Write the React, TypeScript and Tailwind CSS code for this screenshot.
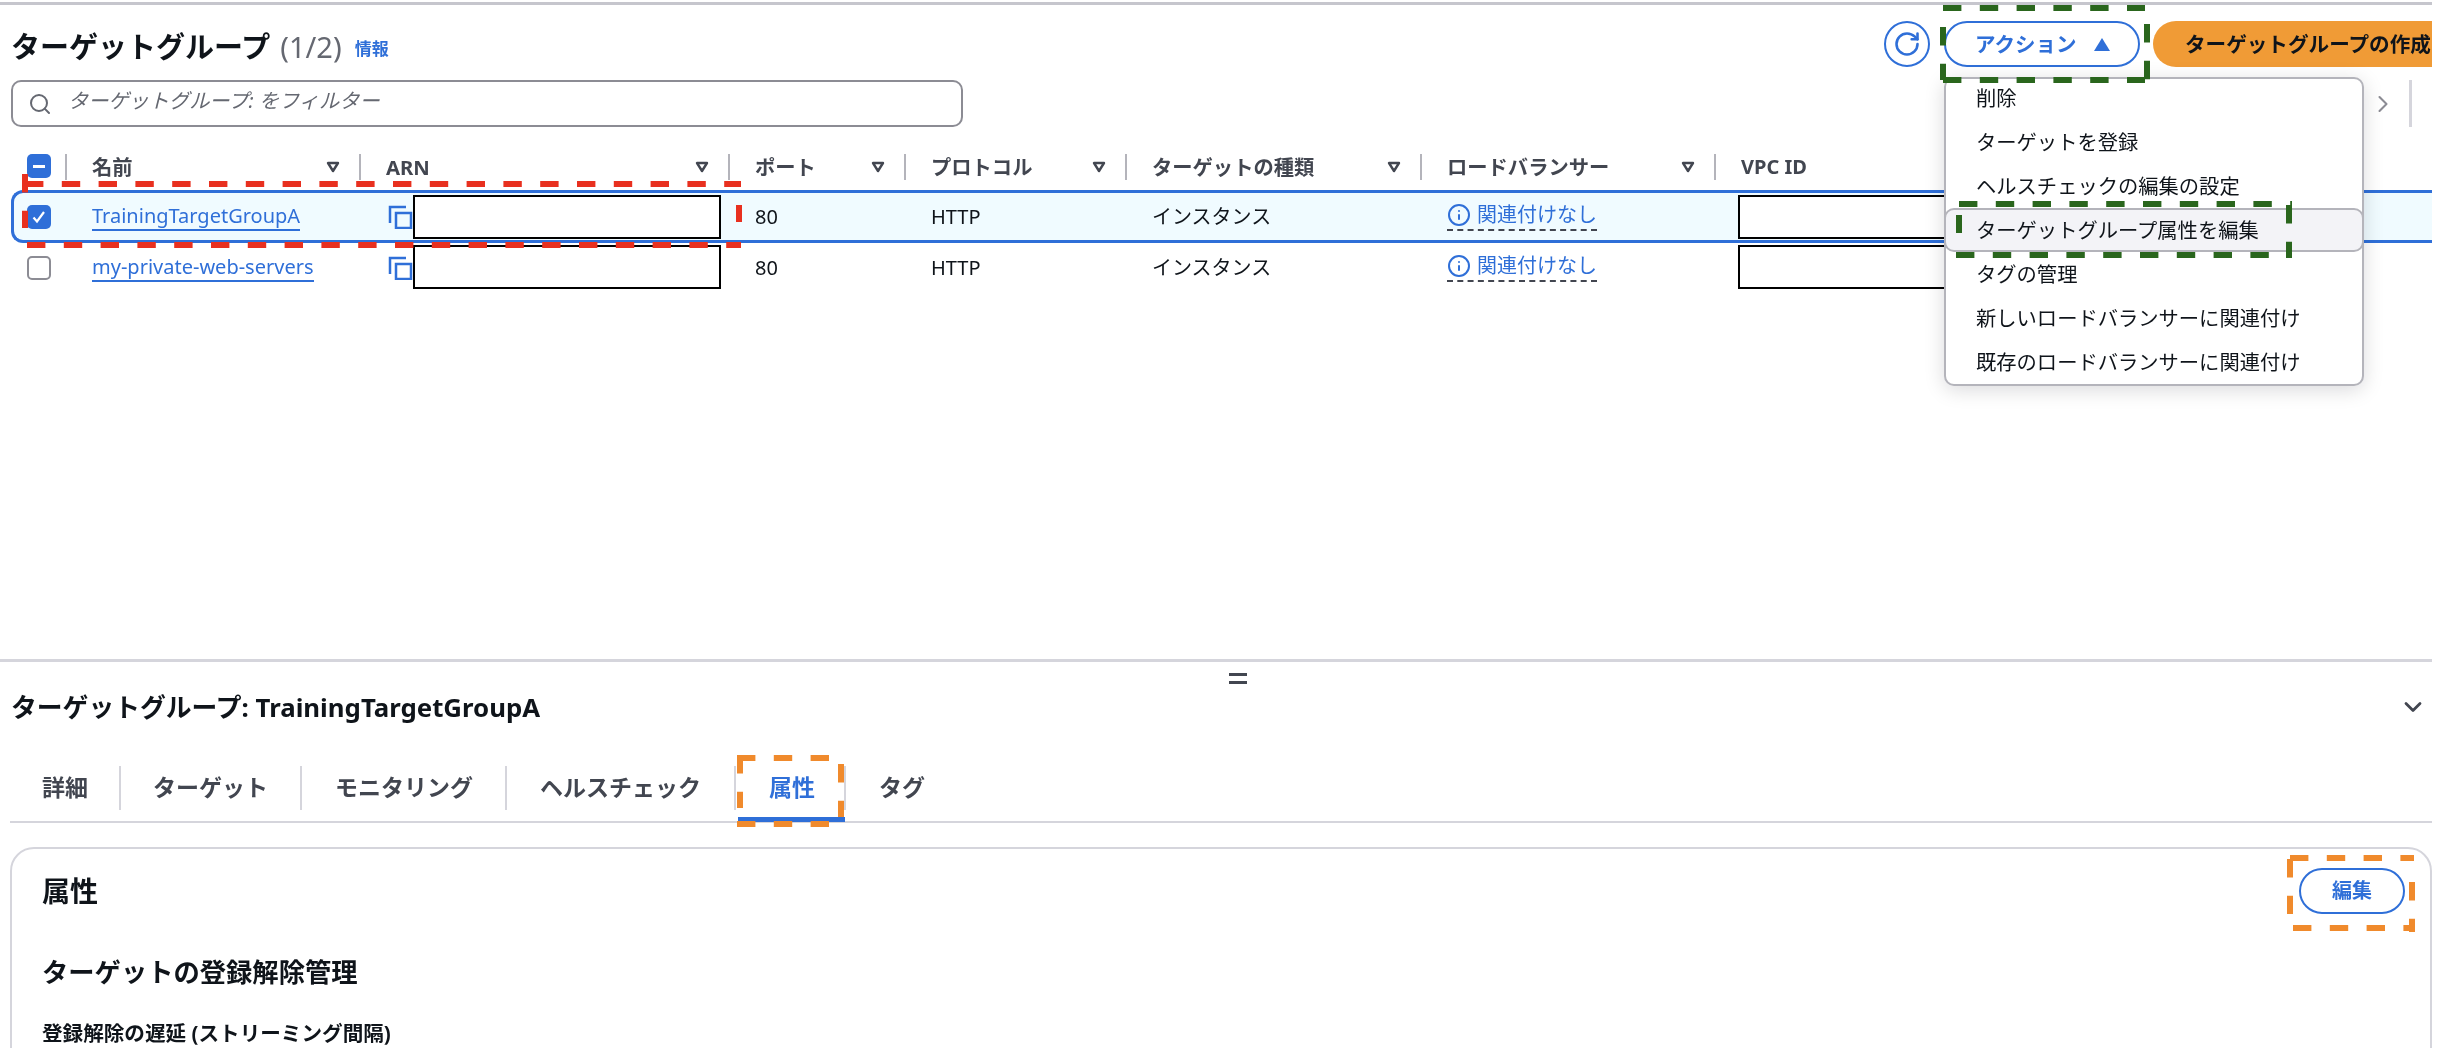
import { Search, RotateCw, Info, ChevronRight, ChevronDown } from 'lucide-react'

const jp = "font-['Noto_Sans','Noto_Sans_CJK_JP',sans-serif]"

const actions = [
    '削除',
    'ターゲットを登録',
    'ヘルスチェックの編集の設定',
    'ターゲットグループ属性を編集',
    'タグの管理',
    '新しいロードバランサーに関連付け',
    '既存のロードバランサーに関連付け',
]

const groups = [
    { name: 'TrainingTargetGroupA', selected: true },
    { name: 'my-private-web-servers', selected: false },
]

function SortCaret() {
    return (
        <svg width="14" height="12" viewBox="0 0 14 12" className="shrink-0">
            <path d="M2 2h10L7 10z" fill="none" stroke="#424650" strokeWidth="2.4" strokeLinejoin="round" />
        </svg>
    )
}

function HeaderCell({ label, className, sort = true }: { label: string; className: string; sort?: boolean }) {
    return (
        <div className={`flex items-center justify-between h-[26px] pl-[25px] pr-[19px] border-r-2 border-[#b4b4bb] shrink-0 ${className}`}>
            <span className="text-[20.3px] font-bold text-[#424650] leading-none">{label}</span>
            {sort && <SortCaret />}
        </div>
    )
}

function CopyIcon() {
    return (
        <svg width="25" height="24" viewBox="0 0 25 24" className="shrink-0">
            <path d="M2 18V2h16" fill="none" stroke="#2f6fd8" strokeWidth="2.5" />
            <rect x="8" y="8" width="15" height="15" fill="none" stroke="#2f6fd8" strokeWidth="2.5" />
        </svg>
    )
}

function Checkbox({ checked }: { checked: boolean }) {
    if (checked) {
        return (
            <div className="w-[24px] h-[24px] rounded-[5px] bg-[#2f6fd8] flex items-center justify-center">
                <svg width="16" height="16" viewBox="0 0 16 16">
                    <path d="M2.5 8.5l3.5 4 7-9.5" fill="none" stroke="white" strokeWidth="2.2" />
                </svg>
            </div>
        )
    }
    return <div className="w-[24px] h-[24px] rounded-[5px] border-2 border-[#8c8c94] bg-white" />
}

// Dashed marker boxes laid over the screenshot
function Dash({ className, v = false, color }: { className: string; v?: boolean; color: string }) {
    return (
        <svg className={`absolute ${className}`} width={v ? 6 : '100%'} height={v ? '100%' : 6}>
            {v ? (
                <line x1="3" y1="0" x2="3" y2="100%" stroke={color} strokeWidth="6" strokeDasharray="18.4 18.4" />
            ) : (
                <line x1="0" y1="3" x2="100%" y2="3" stroke={color} strokeWidth="6" strokeDasharray="18.4 18.4" />
            )}
        </svg>
    )
}

function TargetRow({ name, selected }: { name: string; selected: boolean }) {
    return (
        <div
            className={`flex items-center ${
                selected
                    ? 'h-[53px] bg-[#f0fbff] border-y-[3px] border-l-[3px] border-[#2f6fd8] rounded-l-[12px] ml-[11px]'
                    : 'h-[50px] ml-[11px] border-l-[3px] border-transparent'
            }`}
        >
            <div className="w-[53px] pl-[13px] shrink-0">
                <Checkbox checked={selected} />
            </div>
            <div className="w-[294px] pl-[25px] shrink-0">
                <a className="text-[20px] text-[#2f6fd8] leading-[26px] border-b-2 border-[#2f6fd8] inline-block">{name}</a>
            </div>
            <div className="w-[369px] pl-[27px] shrink-0 flex items-center">
                <CopyIcon />
                <div className={`h-[44px] w-[308px] bg-white border-2 border-black shrink-0 ${selected ? '' : 'mb-[3px]'}`} />
            </div>
            <div className="w-[176px] pl-[25px] shrink-0 text-[20px] text-[#0f141a]">80</div>
            <div className="w-[221px] pl-[25px] shrink-0 text-[20px] text-[#0f141a]">HTTP</div>
            <div className="w-[295px] pl-[25px] shrink-0 text-[20px] text-[#0f141a]">インスタンス</div>
            <div className="w-[294px] pl-[25px] shrink-0">
                <span className="inline-flex items-center gap-[6px] text-[20px] leading-[28px] text-[#2f6fd8] border-b-2 border-dashed border-[#424650]">
                    <Info size={24} strokeWidth={2} />
                    関連付けなし
                </span>
            </div>
            <div className="pl-[22px] shrink-0">
                <div className={`h-[44px] w-[208px] bg-white border-2 border-black ${selected ? '' : 'mb-[3px]'}`} />
            </div>
        </div>
    )
}

export default function App() {
    return (
        <div className={`relative w-[2440px] h-[1048px] overflow-hidden bg-white blur-[0.4px] ${jp}`}>
            <div className="w-[2432px]">
                {/* top panel */}
                <div className="h-[660px] border-t-[3px] mt-[2px] border-b-[3px] border-t-[#c6c6cd] border-b-[#d5d5dc] relative">
                    <div className="flex justify-between items-start pl-[11px] pt-[16px] h-[75px]">
                        <div className="flex items-center h-[46px] pt-[5px]">
                            <h1 className="text-[29px] font-bold text-[#0f141a]">ターゲットグループ</h1>
                            <span className="text-[29px] text-[#656871] ml-[10px]">(1/2)</span>
                            <a className="text-[17px] font-bold text-[#2f6fd8] ml-[13px] mt-[4px]">情報</a>
                        </div>
                        <div className="flex items-center">
                            <button className="w-[46px] h-[46px] rounded-full border-2 border-[#2f6fd8] text-[#2f6fd8] flex items-center justify-center">
                                <RotateCw size={28} strokeWidth={2.2} />
                            </button>
                            <button className="w-[196px] h-[46px] ml-[14px] rounded-full border-2 border-[#2f6fd8] bg-white text-[#2f6fd8] text-[20.5px] font-bold flex items-center pl-[29px] gap-[18px]">
                                アクション
                                <svg width="16" height="13" viewBox="0 0 16 13">
                                    <path d="M8 0l8 13H0z" fill="#2f6fd8" />
                                </svg>
                            </button>
                            <button className="w-[279px] h-[46px] ml-[13px] rounded-l-full bg-[#f09b36] text-[#0f141a] text-[20.6px] font-bold pl-[32px] text-left whitespace-nowrap overflow-hidden">
                                ターゲットグループの作成
                            </button>
                        </div>
                    </div>

                    <div className="flex items-center justify-between pl-[11px]">
                        <div className="w-[952px] h-[47px] border-2 border-[#8c8c94] rounded-[10px] flex items-center pl-[15px] gap-[16px] text-[#656871]">
                            <Search size={24} strokeWidth={2} />
                            <span className="italic text-[20.2px] leading-none mb-[6px]">ターゲットグループ: をフィルター</span>
                        </div>
                        <div className="flex items-center h-[47px] pr-[20px]">
                            <ChevronRight size={28} className="text-[#8c8c94]" strokeWidth={1.8} />
                            <div className="w-[3px] h-[47px] bg-[#d5d5dc] ml-[12px]" />
                        </div>
                    </div>

                    {/* table */}
                    <div className="flex items-center mt-[24px] h-[32px] ml-[11px]">
                        <div className="w-[56px] h-[26px] pl-[16px] shrink-0 border-r-2 border-[#b4b4bb]">
                            <div className="w-[24px] h-[24px] rounded-[5px] bg-[#2f6fd8] flex items-center justify-center">
                                <div className="w-[12px] h-[3px] bg-white" />
                            </div>
                        </div>
                        <HeaderCell label="名前" className="w-[294px]" />
                        <HeaderCell label="ARN" className="w-[369px]" />
                        <HeaderCell label="ポート" className="w-[176px]" />
                        <HeaderCell label="プロトコル" className="w-[221px]" />
                        <HeaderCell label="ターゲットの種類" className="w-[295px]" />
                        <HeaderCell label="ロードバランサー" className="w-[294px]" />
                        <span className="text-[20px] font-bold text-[#424650] pl-[25px]">VPC ID</span>
                    </div>
                    <div className="mt-[7px]">
                        {groups.map((g) => (
                            <TargetRow key={g.name} name={g.name} selected={g.selected} />
                        ))}
                    </div>
                </div>

                {/* split panel */}
                <div className="relative pt-[13px]">
                    <div className="absolute left-[1229px] top-[11px] w-[18px] h-[11px] border-y-[3px] border-[#424650]" />
                    <div className="flex items-center justify-between h-[64px] pl-[11px] pr-[5px]">
                        <h2 className="text-[25.8px] font-bold text-[#0f141a]">ターゲットグループ: TrainingTargetGroupA</h2>
                        <ChevronDown size={28} strokeWidth={2.4} className="text-[#424650]" />
                    </div>
                    <div className="flex items-center h-[65px] pb-[4px] ml-[10px] mt-[19px] border-b-2 border-[#d5d5dc] text-[23px] font-bold text-[#424650] relative">
                        <div className="w-[111px] pl-[32px] h-[44px] flex items-center border-r-2 border-[#d5d5dc]">詳細</div>
                        <div className="w-[181px] pl-[32px] h-[44px] flex items-center border-r-2 border-[#d5d5dc]">ターゲット</div>
                        <div className="w-[205px] pl-[33px] h-[44px] flex items-center border-r-2 border-[#d5d5dc]">モニタリング</div>
                        <div className="w-[229px] pl-[33px] h-[44px] flex items-center border-r-2 border-[#d5d5dc]">ヘルスチェック</div>
                        <div className="w-[110px] pl-[33px] h-[44px] flex items-center border-r-2 border-[#d5d5dc] text-[#2f6fd8]">属性</div>
                        <div className="pl-[33px] h-[44px] flex items-center">タグ</div>
                        <div className="absolute left-[728px] bottom-[-1px] w-[107px] h-[5px] bg-[#2f6fd8]" />
                    </div>
                    <div className="mt-[24px] ml-[10px] h-[260px] border-2 border-[#d5d5dc] rounded-[24px] px-[30px] relative">
                        <div className="flex items-start justify-between">
                            <h3 className="text-[28px] font-bold text-[#0f141a] mt-[21px]">属性</h3>
                            <button className="w-[106px] h-[46px] mt-[19px] mr-[-5px] rounded-full border-2 border-[#2f6fd8] text-[#2f6fd8] text-[20px] font-bold">編集</button>
                        </div>
                        <h4 className="text-[26.3px] font-bold text-[#0f141a] mt-[39px]">ターゲットの登録解除管理</h4>
                        <p className="text-[20.6px] font-bold text-[#0f141a] mt-[26px]">登録解除の遅延 (ストリーミング間隔)</p>
                    </div>
                </div>
            </div>

            {/* actions menu */}
            <div className="absolute left-[1944px] top-[77px] w-[420px] h-[309px] bg-white border-2 border-[#b4b4bb] rounded-[10px] shadow-[0_4px_20px_rgba(0,7,22,0.15)] flex flex-col">
                <div className="-mt-[3px]">
                    {actions.map((a, i) => (
                        <div
                            key={a}
                            className={`h-[44px] shrink-0 flex items-center text-[20.3px] text-[#0f141a] whitespace-nowrap ${
                                i === 3 ? 'bg-[#f3f3f7] border-2 border-[#b4b4bb] rounded-[10px] -mx-[2px] pl-[30px]' : 'pl-[30px]'
                            }`}
                        >
                            {a}
                        </div>
                    ))}
                </div>
            </div>

            {/* red marker */}
            <Dash color="#e8301f" className="left-[25px] top-[181px] w-[716px]" />
            <Dash color="#e8301f" className="left-[27px] top-[242px] w-[714px]" />
            <Dash color="#e8301f" v className="left-[22px] top-[174px] h-[54px]" />
            <Dash color="#e8301f" v className="left-[736px] top-[205px] h-[17px]" />

            {/* green markers */}
            <Dash color="#2a661d" className="left-[1943px] top-[5px] w-[202px]" />
            <Dash color="#2a661d" className="left-[1943px] top-[77px] w-[202px]" />
            <Dash color="#2a661d" v className="left-[1940px] top-[27px] h-[53px]" />
            <Dash color="#2a661d" v className="left-[2144px] top-[24px] h-[56px]" />
            <Dash color="#2a661d" className="left-[1959px] top-[201px] w-[333px]" />
            <Dash color="#2a661d" className="left-[1956px] top-[252px] w-[336px]" />
            <Dash color="#2a661d" v className="left-[1956px] top-[215px] h-[18px]" />
            <Dash color="#2a661d" v className="left-[2286px] top-[205px] h-[53px]" />

            {/* orange markers */}
            <Dash color="#f08a2c" className="left-[737px] top-[755px] w-[105px]" />
            <Dash color="#f08a2c" className="left-[737px] top-[821px] w-[105px]" />
            <Dash color="#f08a2c" v className="left-[737px] top-[755px] h-[53px]" />
            <Dash color="#f08a2c" v className="left-[838px] top-[764px] h-[53px]" />
            <Dash color="#f08a2c" className="left-[2290px] top-[855px] w-[124px]" />
            <Dash color="#f08a2c" className="left-[2293px] top-[925px] w-[121px]" />
            <Dash color="#f08a2c" v className="left-[2287px] top-[859px] h-[55px]" />
            <Dash color="#f08a2c" v className="left-[2409px] top-[882px] h-[50px]" />
        </div>
    )
}
